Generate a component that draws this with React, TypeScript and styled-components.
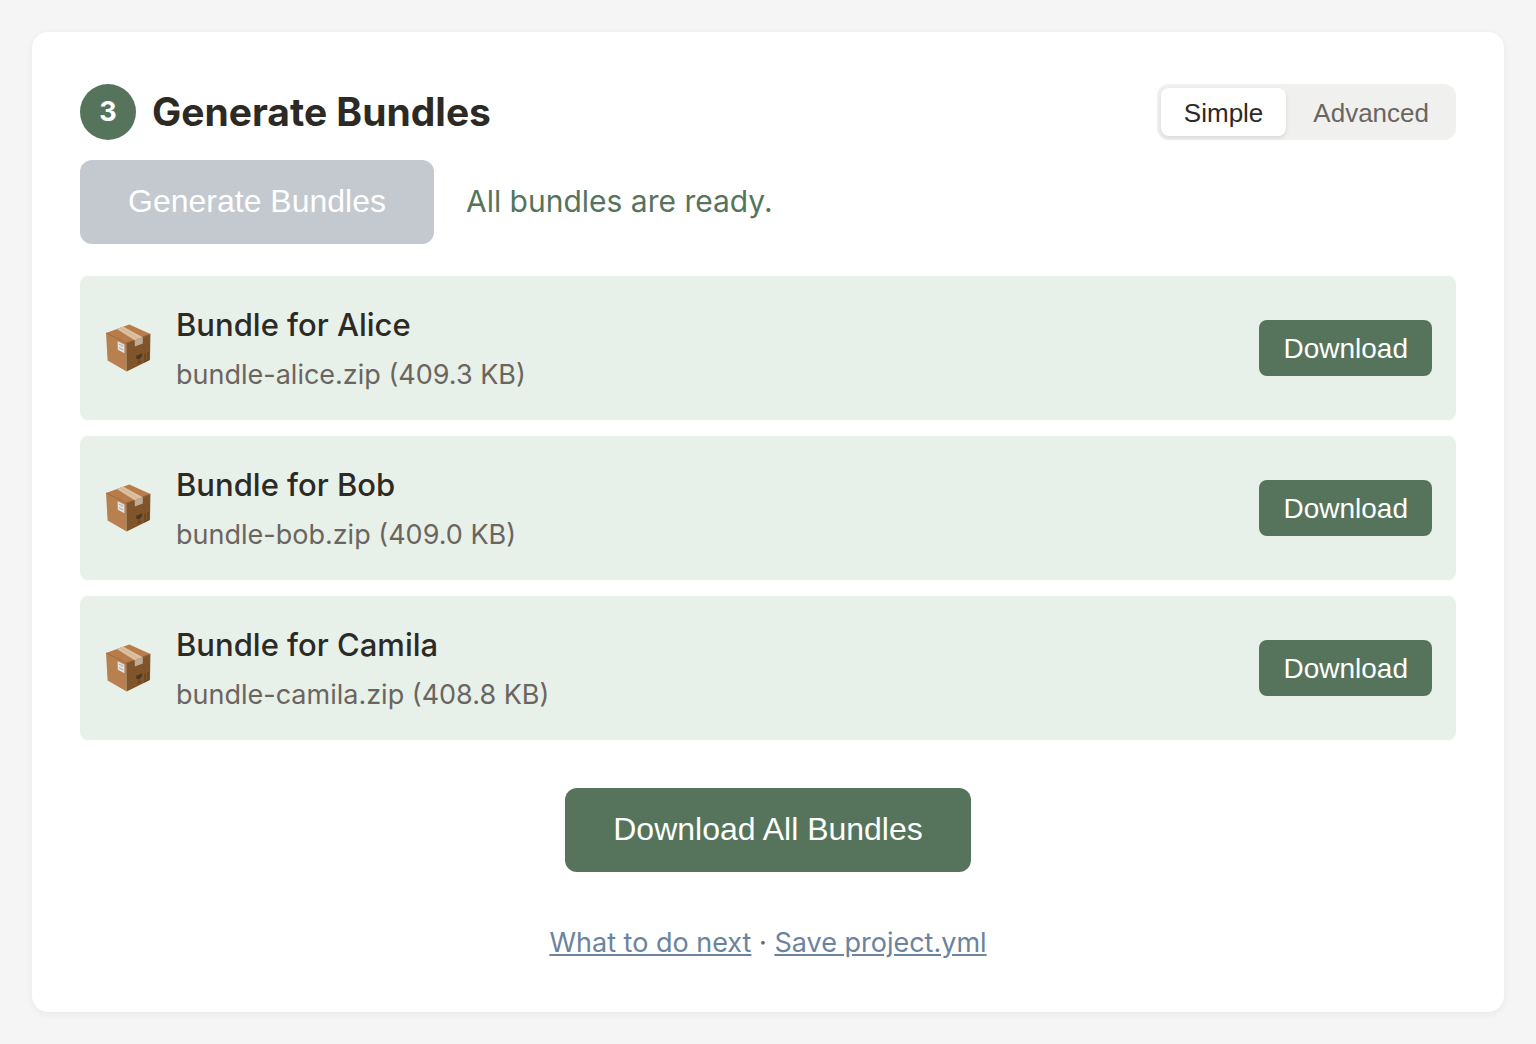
import React, { useState } from "react";
import styled, { createGlobalStyle } from "styled-components";

const sans = `Inter, "Noto Sans", sans-serif`;
const control = `"Liberation Sans", Arial, sans-serif`;

const GlobalStyle = createGlobalStyle`
  *, *::before, *::after { box-sizing: border-box; }
  body {
    margin: 0;
    padding: 32px;
    background: #f5f5f5;
    color: #2d2a26;
    font-family: ${sans};
    font-size: 31px;
  }
`;

const Card = styled.section`
  padding: 48px;
  border-radius: 16px;
  background: #fff;
  box-shadow: 0 2px 8px rgba(0, 0, 0, 0.06);
`;

const Header = styled.header`
  display: flex;
  align-items: center;
  justify-content: space-between;
  gap: 16px;
  margin-bottom: 16px;
`;

const Title = styled.h2`
  display: flex;
  align-items: center;
  gap: 16px;
  margin: 0;
  font-size: 39px;
  font-weight: 700;
  line-height: 64px;
`;

const StepNumber = styled.span`
  display: flex;
  align-items: center;
  justify-content: center;
  width: 56px;
  height: 56px;
  border-radius: 50%;
  background: #55745b;
  color: #fff;
  font-size: 27px;
`;

const ModeSwitch = styled.div`
  display: flex;
  gap: 4px;
  padding: 4px;
  border-radius: 12px;
  background: #f0f0ee;
`;

const ModeButton = styled.button<{ $active: boolean }>`
  height: 48px;
  padding: 2px 23px 0;
  border: 0;
  border-radius: 8px;
  background: ${(p) => (p.$active ? "#fff" : "transparent")};
  box-shadow: ${(p) => (p.$active ? "0 2px 4px rgba(0, 0, 0, 0.1)" : "none")};
  color: ${(p) => (p.$active ? "#2d2a26" : "#6b6560")};
  font-family: ${control};
  font-size: 26px;
  cursor: pointer;
`;

const Actions = styled.div`
  display: flex;
  align-items: baseline;
  gap: 32px;
  margin-bottom: 32px;
`;

const Button = styled.button<{ $small?: boolean }>`
  height: ${(p) => (p.$small ? "56px" : "84px")};
  padding: ${(p) => (p.$small ? "2px 24px 0" : "0 48px 2px")};
  border: 0;
  border-radius: ${(p) => (p.$small ? "8px" : "12px")};
  background: #55745b;
  color: #fff;
  font-family: ${control};
  font-size: ${(p) => (p.$small ? "28px" : "32px")};
  cursor: pointer;

  &:disabled {
    background: #c4c8cf;
    cursor: not-allowed;
  }
`;

const Status = styled.span`
  color: #55745b;
  font-size: 30px;
`;

const BundleList = styled.ul`
  display: flex;
  flex-direction: column;
  gap: 16px;
  margin: 0 0 48px;
  padding: 0;
  list-style: none;
`;

const BundleRow = styled.li`
  display: flex;
  align-items: center;
  gap: 24px;
  padding: 24px;
  border-radius: 8px;
  background: #e8f1e9;
`;

const BundleInfo = styled.div`
  display: flex;
  flex: 1;
  flex-direction: column;
  gap: 4px;
`;

const BundleName = styled.div`
  font-weight: 500;
  line-height: 49px;
`;

const BundleFile = styled.div`
  color: #6b6560;
  font-size: 27px;
  line-height: 43px;
`;

const DownloadAll = styled.div`
  display: flex;
  justify-content: center;
  margin-bottom: 50px;
`;

const NextSteps = styled.p`
  margin: 0;
  color: #6b6560;
  font-size: 27px;
  line-height: 42px;
  text-align: center;
`;

const NextLink = styled.a`
  color: #6b839e;
  text-decoration: underline;
`;

const PackageIcon = () => (
  <svg width="48" height="48" viewBox="0 0 48 48" aria-hidden="true">
    <path d="M2 9 22.2 19 22.6 47.4 3.6 36.6Z" fill="#b9804f" />
    <path d="M46.4 10 22.2 19 22.6 47.4 46 36Z" fill="#81552b" />
    <path d="M25.3.4 46.4 10 22.2 19 2 9Z" fill="#b87c49" />
    <path d="M2 9 22.2 19 46.4 10" fill="none" stroke="#8f5b2d" strokeWidth=".8" />
    <path d="M12.8 5 19.2 2.6 38.8 13.2 30.8 16.2Z" fill="#dcc0a2" />
    <path d="M16 3.8 34.8 14.7" stroke="#cdae8d" strokeWidth=".8" />
    <path d="M30.8 16.2 38.8 13.2V19.4L30.8 22.4Z" fill="#bcab97" />
    <path d="M13.6 17.2 20.4 20.6V29.2L13.8 25.8Z" fill="#e3e3e3" />
    <path d="M15 20.2 17 21.2M15 23.8 19 25.8M18 20.6V23" stroke="#a8a8a8" strokeWidth="1" />
    <path d="M32 32.2 38 29.6Q38 33.4 35 35 32.2 35.4 32 32.2M35 34V38.6M33 39.6 37 37.8" fill="#543619" stroke="#543619" strokeWidth=".7" />
    <path d="M41 29.4V36.4M44 28V35M40 38 45 35.6" stroke="#5f3d1c" strokeWidth="1" />
  </svg>
);

const bundles = [
  { name: "Alice", file: "bundle-alice.zip", size: "409.3 KB" },
  { name: "Bob", file: "bundle-bob.zip", size: "409.0 KB" },
  { name: "Camila", file: "bundle-camila.zip", size: "408.8 KB" },
];

const modes = ["Simple", "Advanced"];

export default function App() {
  const [mode, setMode] = useState("Simple");
  return (
    <>
      <GlobalStyle />
      <Card>
        <Header>
          <Title>
            <StepNumber>3</StepNumber>
            Generate Bundles
          </Title>
          <ModeSwitch>
            {modes.map((m) => (
              <ModeButton
                key={m}
                type="button"
                $active={m === mode}
                aria-pressed={m === mode}
                onClick={() => setMode(m)}
              >
                {m}
              </ModeButton>
            ))}
          </ModeSwitch>
        </Header>
        <Actions>
          <Button type="button" disabled>Generate Bundles</Button>
          <Status role="status">All bundles are ready.</Status>
        </Actions>
        <BundleList>
          {bundles.map((b) => (
            <BundleRow key={b.name}>
              <PackageIcon />
              <BundleInfo>
                <BundleName>Bundle for {b.name}</BundleName>
                <BundleFile>{b.file} ({b.size})</BundleFile>
              </BundleInfo>
              <Button type="button" $small>Download</Button>
            </BundleRow>
          ))}
        </BundleList>
        <DownloadAll>
          <Button type="button">Download All Bundles</Button>
        </DownloadAll>
        <NextSteps>
          <NextLink href="#next">What to do next</NextLink> ·{" "}
          <NextLink href="#project">Save project.yml</NextLink>
        </NextSteps>
      </Card>
    </>
  );
}
